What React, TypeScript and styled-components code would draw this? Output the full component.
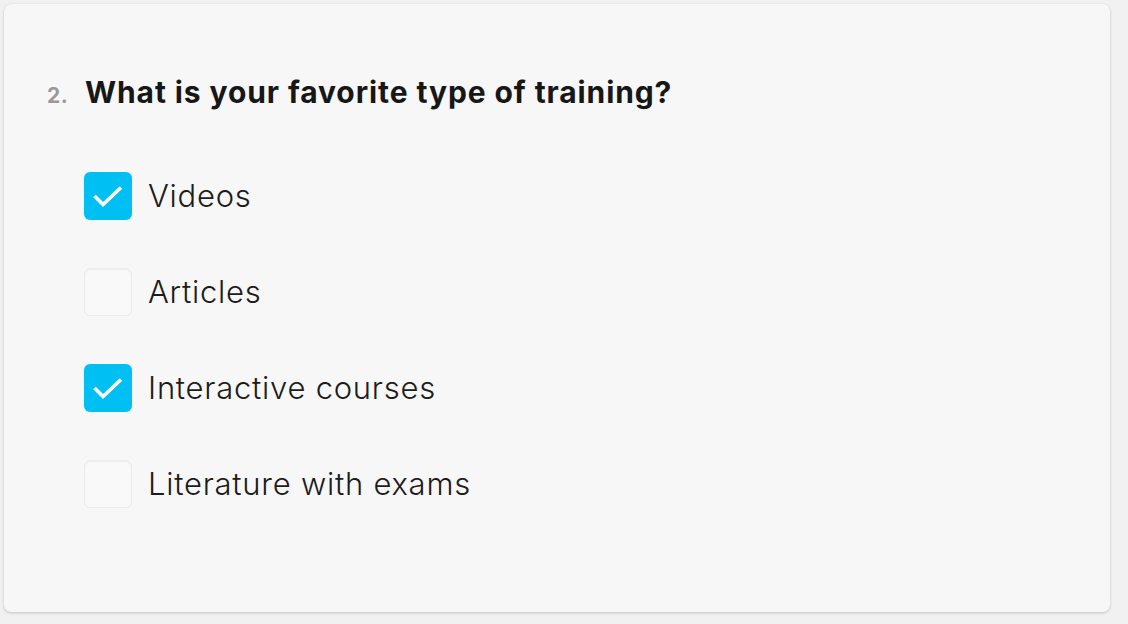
import React from 'react'
import styled, { createGlobalStyle } from 'styled-components'

const GlobalStyle = createGlobalStyle`
  html, body {
    margin: 0;
    padding: 0;
    background: #f1f1f1;
    font-family: Inter, "Noto Sans", sans-serif;
  }
`

const Page = styled.div`
  padding: 4px;
`

const Card = styled.section`
  box-sizing: border-box;
  width: 1106px;
  height: 608px;
  background: #f7f7f7;
  border-radius: 7px;
  box-shadow: 0 1px 3px rgba(0, 0, 0, 0.18), 0 0 1px rgba(0, 0, 0, 0.08);
  padding: 70px 0 0 43px;
`

const Question = styled.div`
  display: flex;
  align-items: baseline;
`

const Number = styled.span`
  width: 38px;
  font-size: 21px;
  font-weight: 700;
  color: #999;
  letter-spacing: 0.4px;
`

const Title = styled.h2`
  margin: 0;
  font-size: 30px;
  line-height: 36px;
  font-weight: 700;
  color: #171717;
  letter-spacing: 0.9px;
`

const Options = styled.ul`
  list-style: none;
  margin: 62px 0 0 37px;
  padding: 0;
  display: flex;
  flex-direction: column;
  gap: 48px;
`

const Option = styled.li`
  display: flex;
  align-items: center;
  gap: 16px;
  height: 48px;
`

const Box = styled.span<{ $checked: boolean }>`
  box-sizing: border-box;
  width: 48px;
  height: 48px;
  flex-shrink: 0;
  border-radius: 6px;
  display: flex;
  align-items: center;
  justify-content: center;
  background: ${(p) => (p.$checked ? '#00bff2' : '#f9f9f9')};
  border: ${(p) => (p.$checked ? 'none' : '1px solid #ececec')};
  box-shadow: ${(p) => (p.$checked ? 'none' : 'inset 0 1px 2px rgba(0,0,0,0.06)')};
`

const Label = styled.span`
  font-size: 31px;
  font-weight: 300;
  color: #1c1c1c;
  letter-spacing: 0.75px;
  padding-bottom: 2px;
`

const Check = () => (
  <svg width="48" height="48" viewBox="0 0 48 48">
    <path d="M10.5 24 L19 32.5 L37 15.5" fill="none" stroke="#fff" strokeWidth="3.6" />
  </svg>
)

const options = [
  { label: 'Videos', checked: true },
  { label: 'Articles', checked: false },
  { label: 'Interactive courses', checked: true },
  { label: 'Literature with exams', checked: false },
]

export default function App() {
  return (
    <>
      <GlobalStyle />
      <Page>
        <Card>
          <Question>
            <Number>2.</Number>
            <Title>What is your favorite type of training?</Title>
          </Question>
          <Options>
            {options.map((o) => (
              <Option key={o.label}>
                <Box $checked={o.checked}>{o.checked && <Check />}</Box>
                <Label>{o.label}</Label>
              </Option>
            ))}
          </Options>
        </Card>
      </Page>
    </>
  )
}
